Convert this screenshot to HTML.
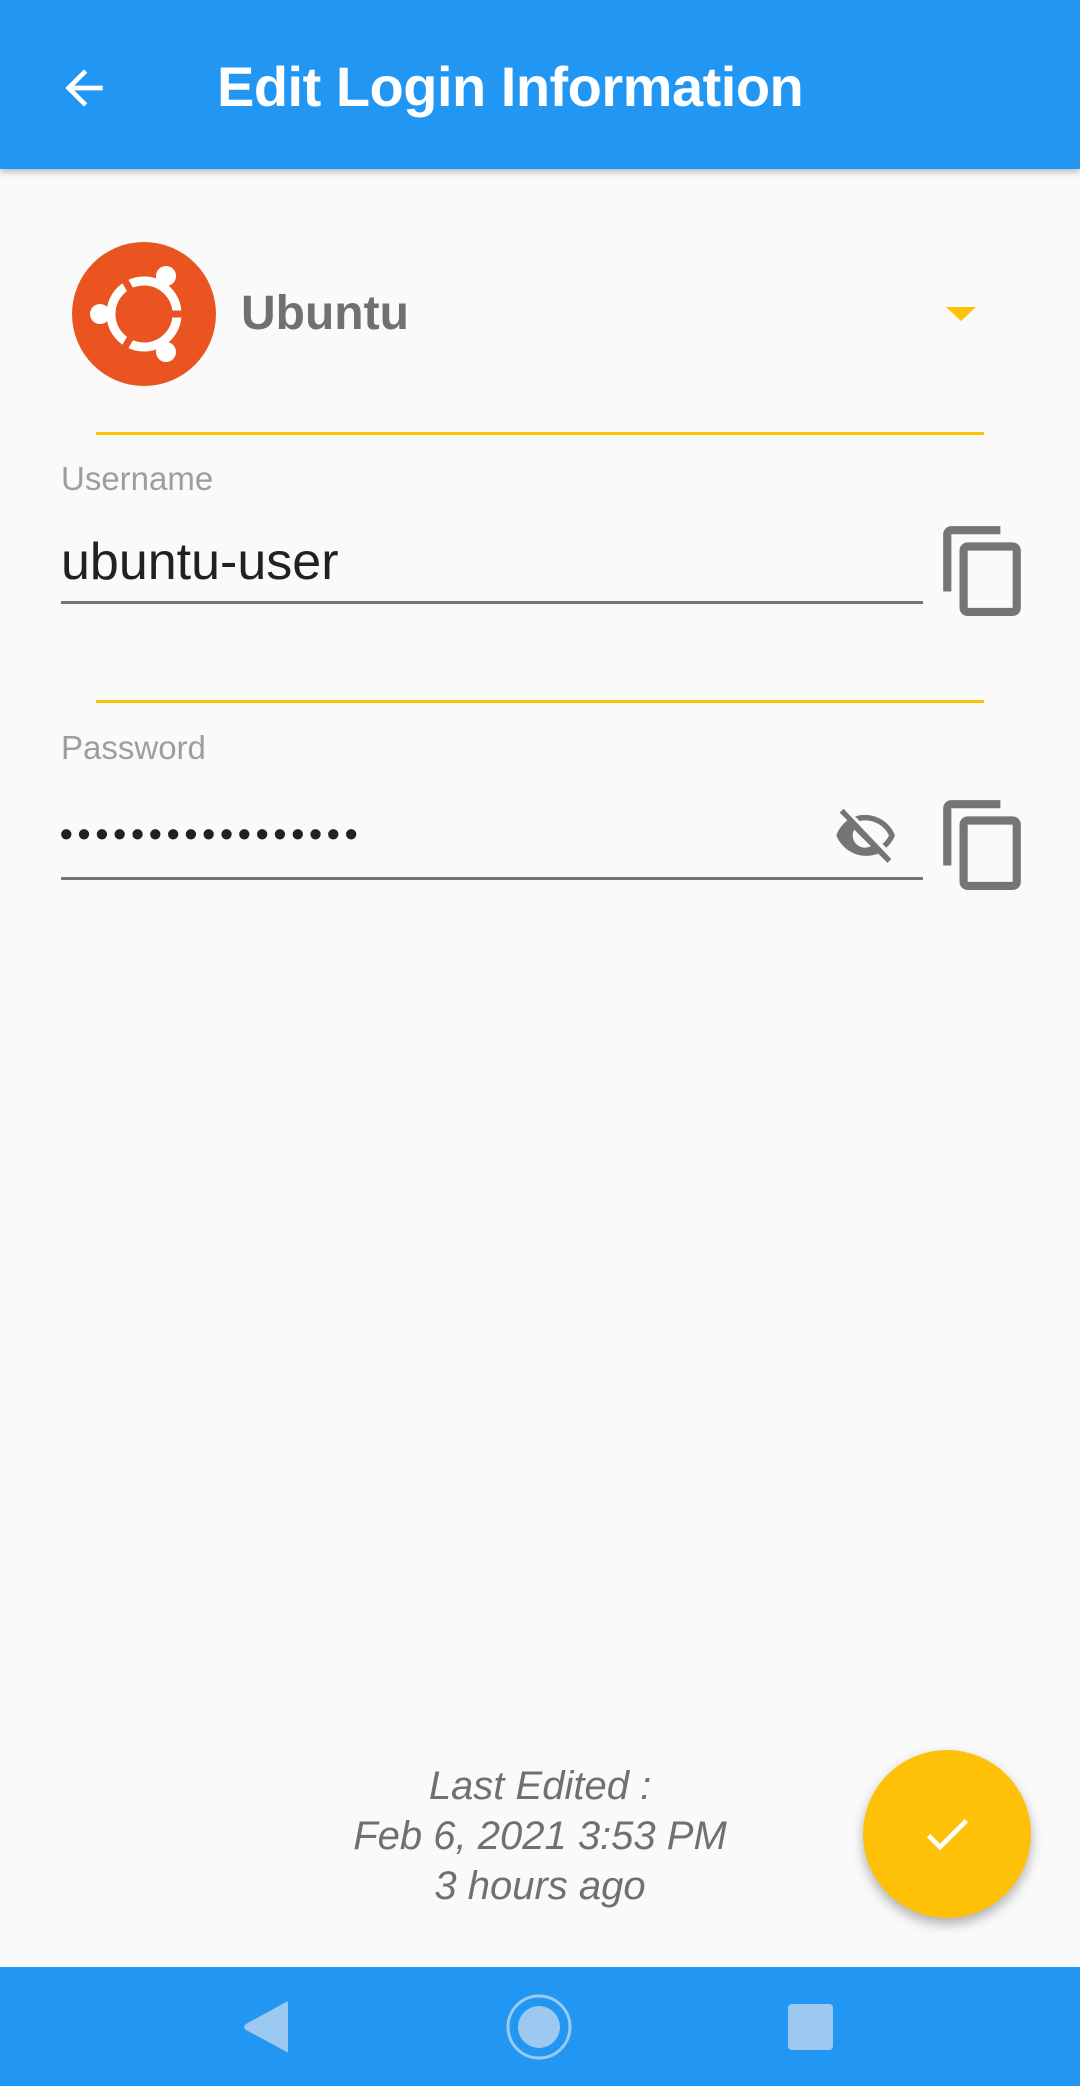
<!DOCTYPE html>
<html><head><meta charset="utf-8"><style>
*{margin:0;padding:0;box-sizing:border-box}
body{width:1080px;height:2086px;background:#fafafa;position:relative;overflow:hidden;font-family:"Liberation Sans",sans-serif}
.abs{position:absolute}
.bar{left:0;top:0;width:1080px;height:169px;background:#2196F3;box-shadow:0 3px 6px rgba(0,0,0,.25)}
.title{left:217px;top:54px;color:#fff;font-size:56px;font-weight:bold;white-space:nowrap;letter-spacing:-0.5px}
.yl{height:3px;background:#FFC107;left:96px;width:888px}
.gl{height:3px;background:#757575;left:61px;width:862px}
.lbl{left:61px;color:#9e9e9e;font-size:33px}
.txt{left:61px;color:#212121;font-size:52px}
.le{left:0;width:1080px;text-align:center;color:#707070;font-style:italic;font-size:40px;line-height:50px}
.nav{left:0;top:1967px;width:1080px;height:119px;background:#2196F3}
</style></head><body>
<div class="abs bar"></div>
<svg class="abs" style="left:56px;top:60px" width="56" height="56" viewBox="0 0 24 24"><path d="M20 11H7.83l5.59-5.59L12 4l-8 8 8 8 1.41-1.41L7.83 13H20v-2z" fill="#fff"/></svg>
<div class="abs title">Edit Login Information</div>

<svg class="abs" style="left:72px;top:242px" width="144" height="144" viewBox="0 0 144 144">
<circle cx="72" cy="72" r="72" fill="#E95420"/>
<circle cx="72" cy="72" r="33" fill="none" stroke="#fff" stroke-width="9"/>
<g stroke="#E95420" stroke-width="7"><line x1="72" y1="72" x2="120" y2="72"/><line x1="72" y1="72" x2="48" y2="30"/><line x1="72" y1="72" x2="48" y2="114"/></g>
<circle cx="28" cy="72" r="10" fill="#fff"/><circle cx="94" cy="34" r="10" fill="#fff"/><circle cx="94" cy="110" r="10" fill="#fff"/></svg>
<div class="abs" style="left:241px;top:286px;color:#707070;font-size:48px;font-weight:bold">Ubuntu</div>
<svg class="abs" style="left:946px;top:307px" width="30" height="14"><path d="M0 0H30L15 14Z" fill="#FFC107"/></svg>
<div class="abs yl" style="top:432px"></div>

<div class="abs lbl" style="top:460px">Username</div>
<div class="abs txt" style="top:532px">ubuntu-user</div>
<div class="abs gl" style="top:601px"></div>
<svg class="abs" style="left:938px;top:522px" width="88" height="94" viewBox="1 0 21 23"><path d="M16 1H4c-1.1 0-2 .9-2 2v14h2V3h12V1zm3 4H8c-1.1 0-2 .9-2 2v14c0 1.1.9 2 2 2h11c1.1 0 2-.9 2-2V7c0-1.1-.9-2-2-2zm0 16H8V7h11v14z" fill="#757575"/></svg>

<div class="abs yl" style="top:700px"></div>
<div class="abs lbl" style="top:729px">Password</div>
<div class="abs" style="left:60px;top:813px;color:#212121;font-size:36px;letter-spacing:5.2px;font-weight:bold">•••••••••••••••••</div>
<div class="abs gl" style="top:877px"></div>
<svg class="abs" style="left:831px;top:804px" width="68" height="60" viewBox="0 0 24 22"><path d="M12 6c3.79 0 7.17 2.130 8.82 5.5-.59 1.22-1.42 2.27-2.410 3.12l1.41 1.41C21.21 14.78 22.33 13.2 23 11.5 21.27 7.11 17 4 12 4c-1.27 0-2.49.2-3.64.57l1.65 1.65C10.66 6.09 11.32 6 12 6zM2.71 3.16L5.53 6c-1.83 1.42-3.28 3.28-4.03 5.5C3.23 15.89 7.5 19 12.5 19c1.52 0 2.98-.29 4.32-.82l3.42 3.42 1.41-1.41L4.13 1.75 2.71 3.16zM12 16c-2.48 0-4.5-2.02-4.5-4.5 0-.77.2-1.49.54-2.12l6.08 6.08c-.63.34-1.35.54-2.12.54z" fill="#757575"/></svg>
<svg class="abs" style="left:938px;top:796px" width="88" height="94" viewBox="1 0 21 23"><path d="M16 1H4c-1.1 0-2 .9-2 2v14h2V3h12V1zm3 4H8c-1.1 0-2 .9-2 2v14c0 1.1.9 2 2 2h11c1.1 0 2-.9 2-2V7c0-1.1-.9-2-2-2zm0 16H8V7h11v14z" fill="#757575"/></svg>

<div class="abs le" style="top:1761px">Last Edited :<br>Feb 6, 2021 3:53 PM<br>3 hours ago</div>

<div class="abs" style="left:863px;top:1750px;width:168px;height:168px;border-radius:50%;background:#FFC107;box-shadow:0 6px 12px rgba(0,0,0,.3)"></div>
<svg class="abs" style="left:919px;top:1806px" width="56" height="56" viewBox="0 0 24 24"><path d="M9 16.17L4.83 12l-1.42 1.41L9 19 21 7l-1.41-1.41z" fill="#fff"/></svg>

<div class="abs nav"></div>
<svg class="abs" style="left:244px;top:2000px" width="50" height="54"><path d="M46 2 Q48 0 48 4 V50 Q48 54 45 51 L6 30 Q2 27 6 24Z" fill="#9cc9ef" transform="translate(-4,0)"/></svg>
<svg class="abs" style="left:505px;top:1993px" width="68" height="68"><circle cx="34" cy="34" r="31" fill="none" stroke="#9cc9ef" stroke-width="3"/><circle cx="34" cy="34" r="21" fill="#9cc9ef"/></svg>
<div class="abs" style="left:788px;top:2004px;width:45px;height:46px;border-radius:4px;background:#9cc9ef"></div>
</body></html>
